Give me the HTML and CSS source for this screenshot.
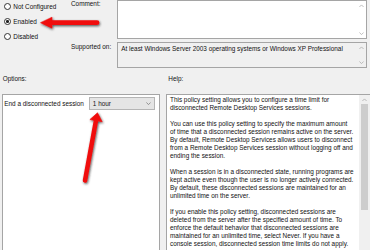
FILE: index.html
```html
<!DOCTYPE html>
<html>
<head>
<meta charset="utf-8">
<link rel="stylesheet" href="styles.css">
</head>
<body>
<div class="dlg">
  <div class="top">
    <div class="radios">
      <div class="radio"><span class="dot"></span><span>Not Configured</span></div>
      <div class="radio"><span class="dot on"></span><span>Enabled</span></div>
      <div class="radio"><span class="dot"></span><span>Disabled</span></div>
    </div>
    <div class="fields">
      <div class="field">
        <div class="flabel">Comment:</div>
        <div class="box comment">
          <div class="boxtext"></div>
          <div class="vscroll">
            <svg class="chev" viewBox="0 0 6 4"><polyline points="0.5,3.5 3,1 5.5,3.5"/></svg>
            <svg class="chev" viewBox="0 0 6 4"><polyline points="0.5,0.5 3,3 5.5,0.5"/></svg>
          </div>
        </div>
      </div>
      <div class="field">
        <div class="flabel sup">Supported on:</div>
        <div class="box supported">
          <div class="boxtext">At least Windows Server 2003 operating systems or Windows XP Professional</div>
          <div class="vscroll">
            <svg class="chev" viewBox="0 0 6 4"><polyline points="0.5,3.5 3,1 5.5,3.5"/></svg>
            <svg class="chev" viewBox="0 0 6 4"><polyline points="0.5,0.5 3,3 5.5,0.5"/></svg>
          </div>
        </div>
      </div>
    </div>
  </div>
  <div class="cols labels">
    <div class="lopt">Options:</div>
    <div class="lhelp">Help:</div>
  </div>
  <div class="cols panels">
    <div class="options">
      <div class="optrow">
        <span class="optlabel">End a disconnected session</span>
        <div class="select"><span>1 hour</span>
          <svg class="selchev" viewBox="0 0 6 4"><polyline points="0.5,0.5 3,3 5.5,0.5"/></svg>
        </div>
      </div>
    </div>
    <div class="help">
      <div class="helptext">This policy setting allows you to configure a time limit for<br>disconnected Remote Desktop Services sessions.<br><br>You can use this policy setting to specify the maximum amount<br>of time that a disconnected session remains active on the server.<br>By default, Remote Desktop Services allows users to disconnect<br>from a Remote Desktop Services session without logging off and<br>ending the session.<br><br>When a session is in a disconnected state, running programs are<br>kept active even though the user is no longer actively connected.<br>By default, these disconnected sessions are maintained for an<br>unlimited time on the server.<br><br>If you enable this policy setting, disconnected sessions are<br>deleted from the server after the specified amount of time. To<br>enforce the default behavior that disconnected sessions are<br>maintained for an unlimited time, select Never. If you have a<br>console session, disconnected session time limits do not apply.</div>
      <div class="hscroll">
        <svg class="chev" viewBox="0 0 6 4"><polyline points="0.5,3.5 3,1 5.5,3.5"/></svg>
        <div class="thumb"></div>
      </div>
    </div>
  </div>
  <svg class="arrows" viewBox="0 0 370 250" width="370" height="250">
    <defs>
      <filter id="sh" x="-20%" y="-20%" width="140%" height="140%">
        <feDropShadow dx="0.8" dy="1.2" stdDeviation="0.8" flood-color="#202020" flood-opacity="0.75"/>
      </filter>
    </defs>
    <g filter="url(#sh)" fill="#f01010" stroke="#f01010">
      <line x1="51" y1="22.7" x2="97" y2="22.7" stroke-width="4.8" stroke-linecap="round"/>
      <polygon points="40.5,22.7 52,17.2 52,28.2" stroke-width="0.6" stroke-linejoin="round"/>
      <line x1="85" y1="180.5" x2="96" y2="120.5" stroke-width="4.5" stroke-linecap="round"/>
      <polygon points="97.5,112.8 102.2,121.8 89.9,119.6" stroke-width="0.6" stroke-linejoin="round"/>
    </g>
  </svg>
</div>
</body>
</html>
```

FILE: styles.css
```css
* {
  box-sizing: border-box;
  margin: 0;
  padding: 0;
}

html, body {
  width: 370px;
  height: 250px;
  overflow: hidden;
  background: #f0f0f0;
}

body {
  font-family: "Liberation Sans", Arial, sans-serif;
  font-size: 6.4px;
  line-height: 8px;
  color: #111;
}

.dlg {
  position: relative;
  width: 370px;
  height: 250px;
  overflow: hidden;
}

.top {
  display: flex;
  height: 69px;
}

.radios {
  width: 71px;
  display: flex;
  flex-direction: column;
  gap: 7px;
  padding: 2.7px 0 0 3.8px;
}

.radio {
  display: flex;
  align-items: center;
  gap: 2.5px;
  height: 8px;
  white-space: nowrap;
}

.dot {
  width: 7px;
  height: 7px;
  border: 1px solid #333;
  border-radius: 50%;
  background: #fff;
  position: relative;
  flex: none;
}

.dot.on::after {
  content: "";
  position: absolute;
  left: 1.2px;
  top: 1.2px;
  width: 2.6px;
  height: 2.6px;
  border-radius: 50%;
  background: #222;
}

.fields {
  flex: 1;
  display: flex;
  flex-direction: column;
  gap: 3px;
  padding-right: 3px;
}

.field {
  display: flex;
}

.flabel {
  width: 46.3px;
  white-space: nowrap;
  padding-top: 0;
}

.flabel.sup {
  padding-top: 0.5px;
}

.box {
  flex: 1;
  display: flex;
  border: 1px solid #a5a5a5;
}

.comment {
  height: 39.3px;
  background: #fff;
}

.supported {
  height: 26px;
  background: #f0f0f0;
}

.boxtext {
  flex: 1;
  padding: 2px 3px;
  white-space: nowrap;
  overflow: hidden;
}

.vscroll {
  width: 10px;
  display: flex;
  flex-direction: column;
  justify-content: space-between;
  align-items: center;
  padding: 3px 0;
}

.chev {
  width: 5px;
  height: 3.5px;
  fill: none;
  stroke: #a0a0a0;
  stroke-width: 0.8;
}

.cols {
  display: grid;
  grid-template-columns: 158px 1fr;
  column-gap: 6.5px;
  padding-left: 1.5px;
}

.labels {
  height: 8px;
  margin-top: 6.3px;
}

.lopt {
  padding-left: 1.2px;
}

.lhelp {
  padding-left: 2.3px;
}

.panels {
  margin-top: 10.7px;
  height: 160px;
}

.options {
  background: #fff;
  border: 1px solid #a5a5a5;
  border-bottom: none;
}

.optrow {
  display: flex;
  align-items: center;
  padding: 2.3px 0 0 1.8px;
}

.optlabel {
  width: 85px;
  white-space: nowrap;
}

.select {
  width: 65.7px;
  height: 12.7px;
  background: #e5e5e5;
  border: 1px solid #b5b5b5;
  display: flex;
  align-items: center;
  justify-content: space-between;
  padding: 0 3px 0 2.5px;
}

.selchev {
  width: 5px;
  height: 3.5px;
  fill: none;
  stroke: #666;
  stroke-width: 0.8;
}

.help {
  background: #fff;
  border: 1px solid #a5a5a5;
  border-bottom: none;
  border-right: none;
  display: flex;
}

.helptext {
  flex: 1;
  padding: 1.5px 0 0 3px;
  white-space: nowrap;
  overflow: hidden;
}

.hscroll {
  width: 11px;
  background: #f0f0f0;
  display: flex;
  flex-direction: column;
  align-items: center;
  padding-top: 3.5px;
}

.thumb {
  width: 6.6px;
  height: 106px;
  margin-top: 2.5px;
  background: #cdcdcd;
}

.arrows {
  position: absolute;
  left: 0;
  top: 0;
  pointer-events: none;
}
```
